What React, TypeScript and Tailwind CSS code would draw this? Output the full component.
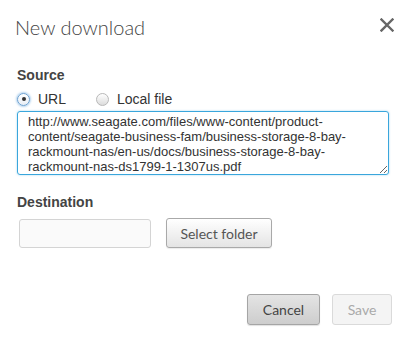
import React from "react";

const url =
  "http://www.seagate.com/files/www-content/product-content/seagate-business-fam/business-storage-8-bay-rackmount-nas/en-us/docs/business-storage-8-bay-rackmount-nas-ds1799-1-1307us.pdf";

export default function App() {
  return (
    <div className="w-[411px] h-[339px] bg-white relative overflow-hidden">
      <div className="flex items-start justify-between pl-[15px] pr-[17px] pt-[15px]">
        <h1 className="font-['Lato',sans-serif] font-light text-[20px] leading-[24px] text-[#444]">
          New download
        </h1>
        <button className="mt-[3px] w-[14px] h-[14px]" aria-label="Close">
          <svg width="14" height="14" viewBox="0 0 14 14">
            <path d="M1.5 1.5 L12.5 12.5 M12.5 1.5 L1.5 12.5" stroke="#666" strokeWidth="2.4" strokeLinecap="square" />
          </svg>
        </button>
      </div>

      <div className="px-[17px] pt-[28px] font-['Liberation_Sans',Arial,sans-serif]">
        <div className="text-[14px] leading-[16px] font-bold text-[#444]">Source</div>
        <div className="flex items-center mt-[8px] h-[16px] text-[14px] leading-[16px] text-[#333]">
          <label className="flex items-center">
            <span className="w-[13px] h-[13px] rounded-full border border-[#6a9fd0] bg-gradient-to-b from-white to-[#e8eef5] shadow-[0_0_2px_1px_rgba(90,160,220,0.45)] flex items-center justify-center">
              <span className="w-[4px] h-[4px] rounded-full bg-[#333]" />
            </span>
            <span className="ml-[8px]">URL</span>
          </label>
          <label className="flex items-center ml-[30px]">
            <span className="w-[13px] h-[13px] rounded-full border border-[#b8b8b8] bg-gradient-to-b from-white to-[#dcdcdc]" />
            <span className="ml-[8px]">Local file</span>
          </label>
        </div>
        <textarea
          readOnly
          value={url}
          className="block mt-[4px] w-[372px] h-[64px] border border-[#3aa6dc] rounded-[3px] pl-[10px] pr-[24px] pt-[2px] pb-0 text-[13px] leading-[15px] text-[#333] font-['Liberation_Sans',Arial,sans-serif] outline-none shadow-[0_0_2px_rgba(58,166,220,0.5)] overflow-hidden"
        />
        <div className="mt-[19px] text-[14px] leading-[16px] font-bold text-[#444]">Destination</div>
        <div className="flex items-center mt-[8px] ml-[2px]">
          <div className="w-[132px] h-[29px] border border-[#d4d4d4] rounded-[3px] bg-[#fafafa]" />
          <button className="ml-[15px] w-[106px] h-[30px] border border-[#a9a9a9] rounded-[3px] bg-gradient-to-b from-white to-[#e4e4e4] font-['Lato',sans-serif] text-[14px] text-[#555] shadow-[0_1px_1px_rgba(0,0,0,0.08)]">
            Select folder
          </button>
        </div>
      </div>

      <div className="flex justify-end pr-[19px] mt-[46px] gap-[12px] font-['Lato',sans-serif] text-[14px]">
        <button className="w-[73px] h-[31px] border border-[#a5a5a5] rounded-[3px] bg-gradient-to-b from-[#e4e4e4] to-[#cdcdcd] text-[#444] shadow-[0_1px_1px_rgba(0,0,0,0.12)]">
          Cancel
        </button>
        <button disabled className="w-[60px] h-[31px] border border-[#dadada] rounded-[3px] bg-[#f4f4f4] text-[#aaa]">
          Save
        </button>
      </div>
    </div>
  );
}
